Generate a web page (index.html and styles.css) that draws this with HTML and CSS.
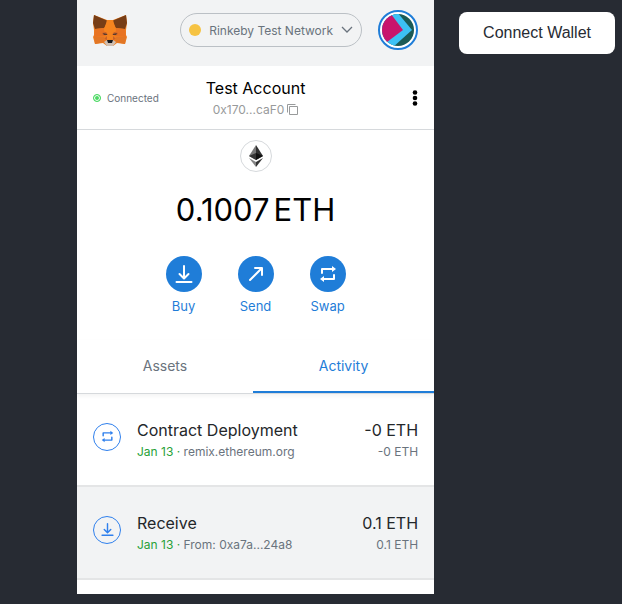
FILE: index.html
```html
<!DOCTYPE html>
<html lang="en">
<head>
<meta charset="utf-8">
<meta name="viewport" content="width=device-width, initial-scale=1">
<title>Wallet</title>
<link rel="stylesheet" href="styles.css">
</head>
<body>
<svg class="defs" aria-hidden="true">
  <symbol id="download" viewBox="0 0 18 18"><path d="M9 1v12M4.500 9 9 13.500 13.500 9M1.500 17h15"/></symbol>
  <symbol id="swap" viewBox="0 0 18 18"><path d="M3 8V4h11M15 10v4H4"/><path class="solid" d="M13 1l4 3-4 3zM5 11l-4 3 4 3z"/></symbol>
</svg>
<div class="page">
  <main class="wallet">
    <header class="top">
      <svg class="fox" viewBox="0 0 34 32" role="img" aria-label="Wallet logo">
        <path fill="#f07f20" d="M1 1l13 5h6l13-5 1 8-1 7 0 5 1 2-2 7-8-1-4 3h-6l-4-3-8 1-2-7 1-2v-5L0 9z"/>
        <path fill="#773d16" d="M1 1l14 6-4 7-9 1-2-6zM33 1 19 7l4 7 9 1 2-6z"/>
        <path fill="#e87322" d="M2 15l9-1 2 8-12 1zM32 15l-9-1-2 8 12 1z"/>
        <path fill="#f5841f" d="M14 6h6l3 10-3 9h-6l-3-9z"/>
        <path fill="#c8622a" d="M9 19l4-1 2 3-5 0zM25 19l-4-1-2 3 5 0zM11 25l3-3 0 4zM23 25l-3-3 0 4z"/>
        <path fill="#e27625" d="M1 23l10 0 1 5-10 2zM33 23l-10 0-1 5 10 2z"/>
        <path fill="#5a3c2c" d="M10 19l4 1v1l-3 0zM24 19l-4 1v1l3 0z"/>
        <path fill="#d0bfb2" d="M11 28l3-2h6l3 2-3 4h-6z"/>
        <path fill="#17191c" d="M14 26h6l-1 3h-4z"/>
      </svg>
      <button class="network" type="button">
        <span class="network-dot"></span>
        <span>Rinkeby Test Network</span>
        <svg class="chevron" viewBox="0 0 12 8" aria-hidden="true"><path d="M1 1l5 5 5-5"/></svg>
      </button>
      <button class="avatar" type="button" aria-label="Account menu">
        <svg viewBox="0 0 32 32" aria-hidden="true">
          <clipPath id="round"><circle cx="16" cy="16" r="16"/></clipPath>
          <g clip-path="url(#round)">
            <path fill="#1b5a56" d="M0 0h32v32H0z"/>
            <path fill="#3cc1f5" d="M8-2h7l15 18L10 34H0V0z"/>
            <path fill="#c8146c" d="M-2 0H9l12 16L5 28l-7 1z"/>
          </g>
        </svg>
      </button>
    </header>

    <section class="account">
      <div class="status"><span class="status-dot"></span>Connected</div>
      <button class="identity" type="button">
        <span class="name">Test Account</span>
        <span class="address">0x170...caF0
          <svg class="copy" viewBox="0 0 11 11" aria-hidden="true"><path d="M2.500 2.500h8v8h-8zM.5 8.500v-8h8"/></svg>
        </span>
      </button>
      <button class="more" type="button" aria-label="Account options">
        <svg viewBox="0 0 6 16" aria-hidden="true"><circle cx="3" cy="2.500" r="2.300"/><circle cx="3" cy="8" r="2.300"/><circle cx="3" cy="13.500" r="2.300"/></svg>
      </button>
    </section>

    <section class="overview">
      <div class="token">
        <svg viewBox="0 0 14 22" role="img" aria-label="Ether">
          <path fill="#777" d="M7 0v15L0 11z"/><path fill="#303030" d="M7 0v15l7-4z"/>
          <path fill="#343434" d="M7 8v7l-7-4z"/><path fill="#111" d="M7 8v7l7-4z"/>
          <path fill="#858585" d="M0 13l7 4v5z"/><path fill="#343434" d="M14 13l-7 4v5z"/>
        </svg>
      </div>
      <h1 class="balance"><span>0.1007</span> <span>ETH</span></h1>
      <div class="actions">
        <button class="action" type="button"><span class="disc"><svg class="glyph"><use href="#download"/></svg></span>Buy</button>
        <button class="action" type="button"><span class="disc"><svg class="glyph" viewBox="0 0 18 18"><path d="M3 15 14.500 3.500M8 3h7v7"/></svg></span>Send</button>
        <button class="action" type="button"><span class="disc"><svg class="glyph"><use href="#swap"/></svg></span>Swap</button>
      </div>
    </section>

    <nav class="tabs">
      <button class="tab" type="button">Assets</button>
      <button class="tab active" type="button">Activity</button>
    </nav>

    <ul class="list">
      <li class="item">
        <span class="ring"><svg class="glyph"><use href="#swap"/></svg></span>
        <div class="detail">
          <h2>Contract Deployment</h2>
          <p><span class="date">Jan 13 ·</span> remix.ethereum.org</p>
        </div>
        <div class="amount"><strong>-0 ETH</strong><span>-0 ETH</span></div>
      </li>
      <li class="item shaded">
        <span class="ring"><svg class="glyph"><use href="#download"/></svg></span>
        <div class="detail">
          <h2>Receive</h2>
          <p><span class="date">Jan 13 ·</span> From: 0xa7a...24a8</p>
        </div>
        <div class="amount"><strong>0.1 ETH</strong><span>0.1 ETH</span></div>
      </li>
    </ul>
  </main>
  <button class="connect" type="button">Connect Wallet</button>
</div>
</body>
</html>
```
FILE: styles.css
```css
* { box-sizing: border-box; }
body { margin: 0; background: #272b33; color: #24272a; font-family: Inter, "Open Sans", sans-serif; }
button { margin: 0; padding: 0; border: 0; background: none; color: inherit; font: inherit; cursor: pointer; }
h1, h2, p, ul { margin: 0; padding: 0; font-weight: 400; }
svg { display: block; }
.defs { position: absolute; width: 0; height: 0; }
.page { display: grid; grid-template-columns: 1fr auto; gap: 25px; align-items: start; padding: 0 7px 10px 77px; }
.wallet { background: #fff; padding-bottom: 14px; }

.top { display: flex; align-items: center; height: 66px; padding: 0 16px 6px; background: #f2f3f4; }
.fox { width: 34px; height: 32px; }
.network { display: flex; align-items: center; gap: 8px; height: 34px; margin-left: auto; padding: 0 8px; border: 1px solid #bbc0c5; border-radius: 17px; color: #6a737d; font-size: 12px; white-space: nowrap; }
.network-dot { width: 12px; height: 12px; border-radius: 50%; background: #f6c343; }
.chevron { width: 12px; height: 8px; fill: none; stroke: #6a737d; stroke-width: 1.3; }
.avatar { width: 40px; height: 40px; margin-left: 16px; padding: 2px; border: 2px solid #1f7dd8; border-radius: 50%; background: #fff; }
.avatar svg { width: 32px; height: 32px; }

.account { display: grid; grid-template-columns: 1fr auto 1fr; align-items: center; height: 64px; padding: 0 16px; border-bottom: 1px solid #d6d9dc; }
.status { display: flex; align-items: center; gap: 6px; color: #6a737d; font-size: 10px; }
.status-dot { width: 8px; height: 8px; border: 1px solid #4cd964; border-radius: 50%; background: #4cd964; box-shadow: inset 0 0 0 1px #fff; }
.identity { display: grid; justify-items: center; gap: 2px; }
.name { color: #000; font-size: 16px; line-height: 22px; }
.address { display: flex; align-items: center; gap: 3px; color: #989a9b; font-size: 12px; line-height: 18px; }
.copy { width: 11px; height: 11px; fill: none; stroke: #989a9b; }
.more { justify-self: end; }
.more svg { width: 6px; height: 16px; }

.overview { display: grid; justify-items: center; padding: 10px 16px 24px; }
.token { display: grid; place-items: center; width: 32px; height: 32px; border: 1px solid #d6d9dc; border-radius: 50%; }
.token svg { width: 14px; height: 22px; }
.balance { display: flex; gap: 4px; margin: 16px 0 24px; color: #000; font-size: 31px; line-height: 44px; }
.actions { display: flex; gap: 36px; }
.action { display: grid; justify-items: center; gap: 4px; width: 36px; color: #1f7dd8; font-size: 13px; line-height: 20px; }
.disc { display: grid; place-items: center; width: 36px; height: 36px; border-radius: 50%; background: #1f7dd8; color: #fff; }
.glyph { width: 18px; height: 18px; fill: none; stroke: currentColor; stroke-width: 2; stroke-linecap: round; stroke-linejoin: round; }
.solid { fill: currentColor; stroke-width: 0; }

.tabs { display: flex; height: 54px; border-bottom: 1px solid #d6d9dc; box-shadow: 0 2px 4px #0000000d; }
.tab { flex: 1 1 auto; padding-bottom: 2px; color: #6a737d; font-size: 14px; }
.tab.active { padding-bottom: 0; border-bottom: 2px solid #1f7dd8; color: #1f7dd8; }

.list { list-style: none; }
.item { display: flex; align-items: center; gap: 16px; height: 93px; padding: 0 16px 6px; border-bottom: 2px solid #e4e5e6; }
.shaded { background: #f2f3f4; }
.ring { display: grid; place-items: center; flex: none; width: 28px; height: 28px; border: 1px solid #2f80ed; border-radius: 50%; color: #2f80ed; }
.ring .glyph { width: 13px; height: 13px; }
.detail, .amount { padding-top: 6px; }
.detail { flex: 1; min-width: 0; }
h2, .amount strong { font-size: 16px; font-weight: 400; line-height: 24px; white-space: nowrap; }
.detail p, .amount span { color: #6a737d; font-size: 12px; line-height: 20px; white-space: nowrap; }
.detail .date { color: #28a138; }
.amount { display: grid; justify-items: end; }

.connect { height: 42px; margin-top: 12px; padding: 0 24px; border-radius: 8px; background: #fff; color: #272b33; font: 16px "Liberation Sans", Arial, sans-serif; }
```
